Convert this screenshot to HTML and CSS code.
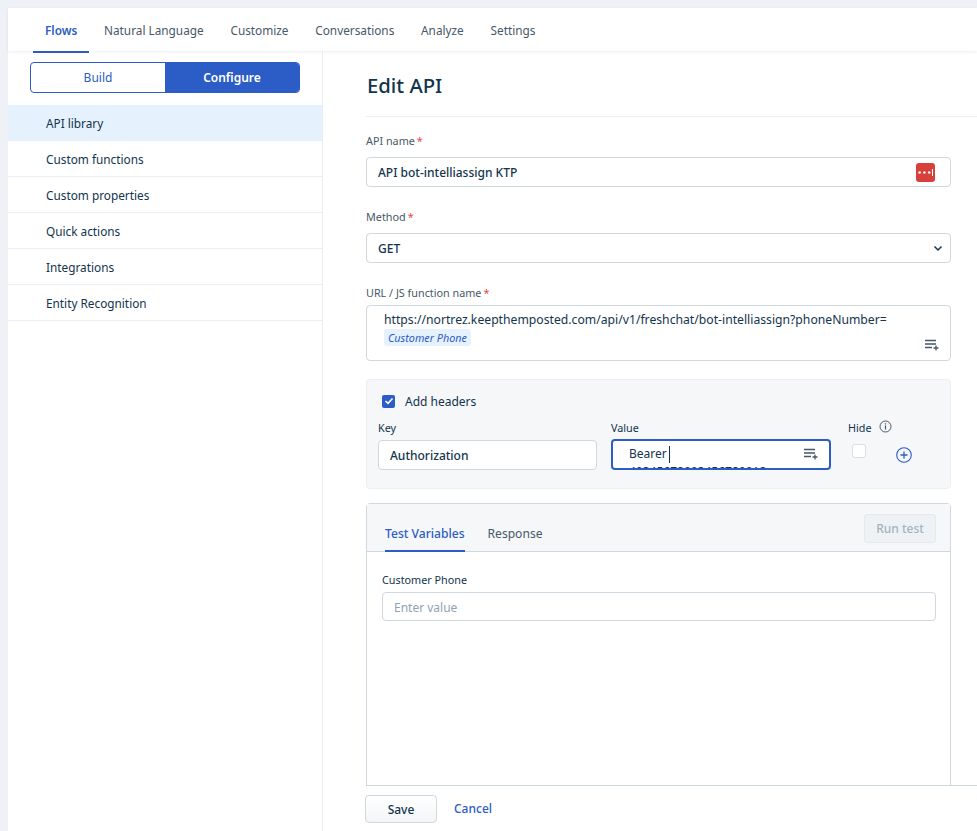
FILE: index.html
```html
<!DOCTYPE html>
<html lang="en">
<head>
<meta charset="utf-8">
<title>Edit API</title>
<link rel="stylesheet" href="styles.css">
</head>
<body>
<div class="app">
  <nav class="topbar">
    <a class="tab active">Flows</a>
    <a class="tab">Natural Language</a>
    <a class="tab">Customize</a>
    <a class="tab">Conversations</a>
    <a class="tab">Analyze</a>
    <a class="tab">Settings</a>
  </nav>
  <div class="body-row">
    <aside class="sidebar">
      <div class="toggle">
        <span class="toggle-btn">Build</span>
        <span class="toggle-btn on">Configure</span>
      </div>
      <ul class="menu">
        <li class="menu-item selected">API library</li>
        <li class="menu-item">Custom functions</li>
        <li class="menu-item">Custom properties</li>
        <li class="menu-item">Quick actions</li>
        <li class="menu-item">Integrations</li>
        <li class="menu-item">Entity Recognition</li>
      </ul>
    </aside>
    <main class="main">
      <div class="scroll">
        <h1 class="title">Edit API</h1>
        <div class="form">
          <div class="field">
            <label class="label">API name<span class="req">*</span></label>
            <div class="input">
              <span class="input-text">API bot-intelliassign KTP</span>
              <svg class="lastpass" width="19" height="19" viewBox="0 0 19 19"><rect width="19" height="19" rx="3" fill="#d8403c"/><circle cx="3.600" cy="9.500" r="1.300" fill="#fff"/><circle cx="8.400" cy="9.500" r="1.300" fill="#fff"/><circle cx="13.200" cy="9.500" r="1.300" fill="#fff"/><rect x="16" y="6" width="1" height="7" fill="#fff"/></svg>
            </div>
          </div>
          <div class="field">
            <label class="label">Method<span class="req">*</span></label>
            <div class="input">
              <span class="input-text">GET</span>
              <svg class="chevron" width="10" height="7" viewBox="0 0 10 7"><path d="M1.500 1.500 5 5l3.500-3.500" fill="none" stroke="#12344d" stroke-width="1.500"/></svg>
            </div>
          </div>
          <div class="field">
            <label class="label label-tight">URL / JS function name<span class="req">*</span></label>
            <div class="url-box">
              <div class="url-text">https://nortrez.keepthemposted.com/api/v1/freshchat/bot-intelliassign?phoneNumber=</div>
              <span class="chip">Customer Phone</span>
              <svg class="add-var url-add" width="16" height="12" viewBox="0 0 16 12"><path d="M1 1.500h11M1 5h11M1 8.500h7M12 6.500v5M9.500 9h5" fill="none" stroke="#475867" stroke-width="1.300"/></svg>
            </div>
          </div>
          <section class="headers">
            <div class="check-row">
              <span class="checkbox"><svg width="10" height="8" viewBox="0 0 10 8"><path d="M1.500 4 4 6.300 8.500 1.500" fill="none" stroke="#fff" stroke-width="1.600"/></svg></span>
              <span>Add headers</span>
            </div>
            <div class="header-row">
              <div class="col-key">
                <label class="mini-label">Key</label>
                <div class="input"><span class="input-text">Authorization</span></div>
              </div>
              <div class="col-value">
                <label class="mini-label">Value</label>
                <div class="value-box">
                  <div class="value-text"><span>Bearer</span><span class="caret"></span><br>49345678903456789012</div>
                  <svg class="add-var" width="16" height="12" viewBox="0 0 16 12"><path d="M1 1.500h11M1 5h11M1 8.500h7M12 6.500v5M9.500 9h5" fill="none" stroke="#475867" stroke-width="1.300"/></svg>
                </div>
              </div>
              <div class="col-hide">
                <label class="mini-label hide-label">Hide
                  <svg class="info" width="13" height="13" viewBox="0 0 13 13"><circle cx="6.500" cy="6.500" r="5.500" fill="none" stroke="#475867"/><path d="M6.500 5.500v4M6.500 3.300v1.200" stroke="#475867" stroke-width="1.200"/></svg>
                </label>
                <span class="hide-box"></span>
              </div>
              <svg class="plus" width="16" height="16" viewBox="0 0 16 16"><circle cx="8" cy="8" r="7.300" fill="none" stroke="#2c5cc5" stroke-width="1.100"/><path d="M8 4.500v7M4.500 8h7" stroke="#2c5cc5" stroke-width="1.300"/></svg>
            </div>
          </section>
          <section class="test">
            <div class="test-head">
              <div class="test-tabs">
                <span class="test-tab active">Test Variables</span>
                <span class="test-tab">Response</span>
              </div>
              <span class="run">Run test</span>
            </div>
            <div class="test-body">
              <label class="mini-label">Customer Phone</label>
              <div class="input placeholder"><span class="input-text">Enter value</span></div>
            </div>
          </section>
        </div>
      </div>
      <footer class="footer">
        <button class="save">Save</button>
        <a class="cancel">Cancel</a>
      </footer>
    </main>
  </div>
</div>
</body>
</html>
```
FILE: styles.css
```css
* { box-sizing: border-box; }
html, body { height: 100%; }
body {
  margin: 0;
  background: #eef1f5;
  font-family: "Noto Sans", sans-serif;
  font-size: 12px;
  color: #12344d;
  overflow: hidden;
}
.app {
  height: 831px;
  padding: 8px 0 0 8px;
  display: flex;
  flex-direction: column;
}
.topbar {
  height: 43px;
  flex: none;
  background: #fff;
  display: flex;
  padding-left: 25px;
  box-shadow: 0 1px 3px rgba(18, 52, 77, .08);
  position: relative;
  z-index: 1;
}
.tab {
  height: 45px;
  padding: 13px 12px 0;
  margin-right: 2.750px;
  font-size: 11.800px;
  line-height: 18px;
  color: #475867;
  white-space: nowrap;
}
.tab.active {
  color: #2c5cc5;
  font-weight: 600;
  border-bottom: 2px solid #2c5cc5;
  width: 56px;
  margin-right: 3px;
}
.body-row { flex: 1; min-height: 0; display: flex; background: #fff; }
.sidebar {
  width: 315px;
  flex: none;
  border-right: 1px solid #ebeff3;
  padding-top: 11px;
}
.toggle {
  display: flex;
  margin: 0 22px 0 22px;
  height: 31px;
  border: 1px solid #2c5cc5;
  border-radius: 4px;
  overflow: hidden;
}
.toggle-btn {
  flex: 1;
  text-align: center;
  line-height: 29px;
  color: #2c5cc5;
}
.toggle-btn.on { background: #2c5cc5; color: #fff; font-weight: 600; }
.menu { list-style: none; margin: 12px 0 0; padding: 0; }
.menu-item {
  height: 36px;
  padding: 0 38px;
  font-size: 11.800px;
  line-height: 36px;
  border-bottom: 1px solid #ebeff3;
}
.menu-item.selected { background: #e5f2fd; border-bottom: 0; }
.main { flex: 1; min-width: 0; display: flex; flex-direction: column; }
.scroll { flex: 1; min-height: 0; overflow: hidden; padding-left: 43px; }
.title {
  margin: 0;
  height: 66px;
  border-bottom: 1px solid #ebeff3;
  font-size: 20.300px;
  font-weight: 500;
  line-height: 68px;
  padding-left: 1px;
}
.form { width: 585px; padding-top: 16px; }
.field { margin-bottom: 22px; }
.label { display: block; height: 24px; line-height: 15px; font-size: 10.800px; color: #475867; }
.label-tight { height: 20px; }
.req { color: #e5484d; margin-left: 2px; }
.input {
  height: 30px;
  background: #fff;
  border: 1px solid #cfd7df;
  border-radius: 4px;
  padding: 0 11px;
  display: flex;
  align-items: center;
  justify-content: space-between;
  position: relative;
}
.input-text { font-weight: 500; padding-top: 1px; }
.lastpass { margin-right: 4px; }
.chevron { margin-right: -4px; }
.url-box {
  height: 56px;
  border: 1px solid #cfd7df;
  border-radius: 4px;
  padding: 4px 17px;
  position: relative;
}
.url-text { line-height: 20px; font-size: 12.200px; white-space: nowrap; }
.chip {
  display: block;
  width: fit-content;
  margin-top: -1px;
  background: #e5f2fd;
  color: #2c5cc5;
  font-size: 10.800px;
  font-style: italic;
  line-height: 17px;
  padding: 0 4px;
  border-radius: 3px;
}
.url-add { position: absolute; right: 10px; bottom: 9px; }
.headers {
  height: 110px;
  margin-top: -4px;
  background: #f5f7f9;
  border: 1px solid #ebeff3;
  border-radius: 4px;
  padding: 13px 11px 0;
}
.check-row { display: flex; align-items: center; padding-left: 4px; height: 16px; }
.checkbox {
  width: 13px;
  height: 13px;
  background: #2c5cc5;
  border-radius: 2px;
  display: flex;
  align-items: center;
  justify-content: center;
  margin-right: 10px;
}
.header-row { display: flex; margin-top: 11px; position: relative; }
.mini-label { display: block; font-size: 10.800px; line-height: 16px; color: #12344d; height: 20px; }
.col-key { width: 219px; margin-right: 14px; }
.col-value { width: 220px; margin-right: 17px; }
.value-box {
  height: 31px;
  background: #fff;
  border: 2px solid #2c5cc5;
  border-radius: 4px;
  position: relative;
  overflow: hidden;
  padding: 4px 16px;
  margin-top: -1px;
}
.value-text { line-height: 18px; font-size: 12px; white-space: nowrap; }
.caret { display: inline-block; width: 1px; height: 17px; background: #12344d; margin-left: 2px; vertical-align: middle; }
.value-box .add-var { position: absolute; right: 10px; top: 7px; }
.col-hide { width: 40px; flex: none; }
.hide-label { display: flex; align-items: flex-start; gap: 7px; white-space: nowrap; }
.info { flex: none; }
.hide-box {
  display: block;
  width: 14px;
  height: 14px;
  margin: 4px 0 0 4px;
  background: #fff;
  border: 1px solid #dadfe3;
  border-radius: 3px;
}
.plus { margin: 27px 0 0 8px; }
.test {
  height: 400px;
  margin-top: 14px;
  border: 1px solid #cfd7df;
  border-radius: 4px 4px 0 0;
}
.test-head {
  height: 48px;
  background: #f5f7f9;
  border-bottom: 1px solid #cfd7df;
  display: flex;
  justify-content: space-between;
  padding: 0 14px 0 18px;
}
.test-tabs { display: flex; gap: 23px; }
.test-tab { height: 48px; padding-top: 21px; font-size: 12.100px; line-height: 18px; color: #475867; }
.test-tab.active { color: #2c5cc5; font-weight: 500; border-bottom: 2px solid #2c5cc5; }
.run {
  margin-top: 10px;
  width: 72px;
  height: 29px;
  background: #eff2f5;
  border: 1px solid #e6eaee;
  border-radius: 3px;
  color: #a6b2bd;
  font-weight: 500;
  text-align: center;
  line-height: 27px;
}
.test-body { padding: 20px 14px 0 15px; }
.placeholder { height: 29px; }
.placeholder .input-text { color: #92a2b1; font-weight: 400; }
.footer {
  height: 38px;
  flex: none;
  margin-left: 43px;
  border-top: 1px solid #cfd7df;
  background: #fff;
  display: flex;
  align-items: flex-start;
  padding-top: 9px;
  margin-bottom: 8px;
}
.save {
  width: 72px;
  height: 28px;
  margin-left: -1px;
  background: linear-gradient(#fff, #f3f5f7);
  border: 1px solid #cfd7df;
  border-radius: 4px;
  font: 500 12px "Noto Sans", sans-serif;
  color: #12344d;
}
.cancel { margin-left: 17px; line-height: 28px; color: #2c5cc5; font-weight: 500; }
```
